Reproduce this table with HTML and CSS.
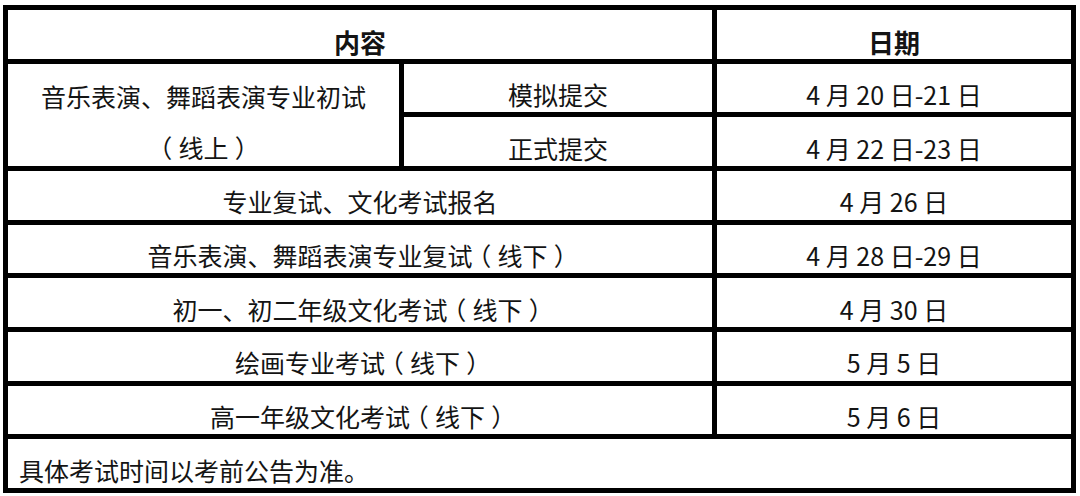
FILE: index.html
```html
<!DOCTYPE html>
<html lang="zh-CN">
<head>
<meta charset="utf-8">
<link rel="stylesheet" href="styles.css">
</head>
<body>
<div class="sheet">
  <div class="cell head span-2">内容</div>
  <div class="cell head">日期</div>

  <div class="cell group">
    <span>音乐表演、舞蹈表演专业初试</span>
    <span><span class="par">（</span>线上<span class="par">）</span></span>
  </div>
  <div class="cell">模拟提交</div>
  <div class="cell">4 月 20 日-21 日</div>
  <div class="cell">正式提交</div>
  <div class="cell">4 月 22 日-23 日</div>

  <div class="cell span-2">专业复试、文化考试报名</div>
  <div class="cell">4 月 26 日</div>

  <div class="cell span-2">音乐表演、舞蹈表演专业复试<span class="par">（</span>线下<span class="par">）</span></div>
  <div class="cell">4 月 28 日-29 日</div>

  <div class="cell span-2">初一、初二年级文化考试<span class="par">（</span>线下<span class="par">）</span></div>
  <div class="cell">4 月 30 日</div>

  <div class="cell span-2">绘画专业考试<span class="par">（</span>线下<span class="par">）</span></div>
  <div class="cell">5 月 5 日</div>

  <div class="cell span-2">高一年级文化考试<span class="par">（</span>线下<span class="par">）</span></div>
  <div class="cell">5 月 6 日</div>

  <div class="cell note span-3">具体考试时间以考前公告为准。</div>
</div>
</body>
</html>
```

FILE: styles.css
```css
* {
  box-sizing: border-box;
}

html, body {
  margin: 0;
  padding: 0;
  background: #ffffff;
}

body {
  font-family: "Noto Sans CJK SC", "Noto Sans", sans-serif;
  color: #141414;
}

.sheet {
  margin: 5px 0 0 3px;
  width: 1073px;
  height: 488px;
  border: 5px solid #000;
  background: #000;
  display: grid;
  grid-template-columns: 391px 308px 1fr;
  grid-template-rows: repeat(9, 1fr);
  gap: 5px;
}

.cell {
  background: #ffffff;
  display: flex;
  align-items: center;
  justify-content: center;
  font-size: 25px;
  line-height: 30px;
  padding-top: 12px;
  white-space: nowrap;
}

.par {
  display: inline-block;
  font-feature-settings: "halt";
  padding: 0 0.25em;
}

.head {
  font-weight: 700;
  font-size: 26px;
  padding-top: 16px;
}

.span-2 {
  grid-column: 1 / 3;
}

.span-3 {
  grid-column: 1 / 4;
}

.group {
  grid-row: 2 / 4;
  flex-direction: column;
  line-height: 51px;
  padding-top: 14px;
}

.note {
  justify-content: flex-start;
  padding-left: 11px;
}
```
